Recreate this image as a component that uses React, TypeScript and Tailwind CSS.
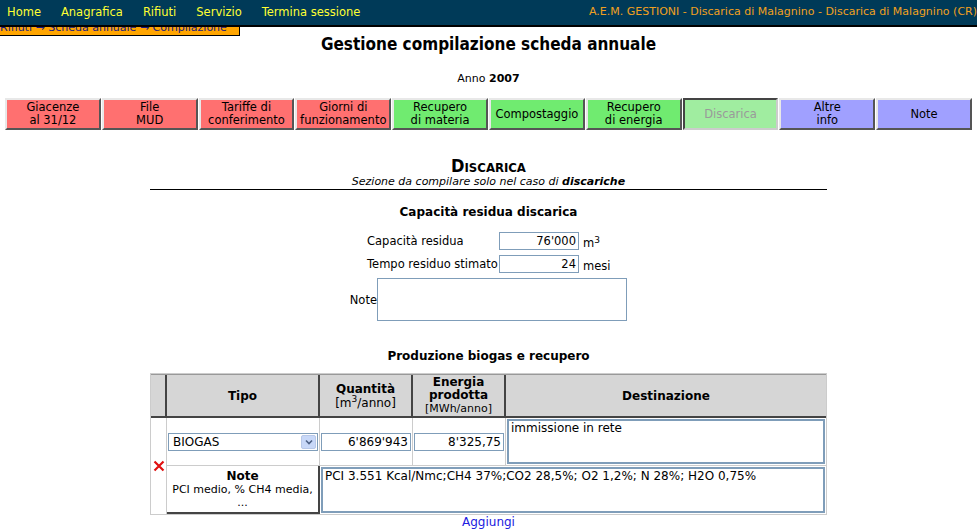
import React from "react";

const tabs = [
  { label: ["Giacenze", "al 31/12"], color: "red" },
  { label: ["File", "MUD"], color: "red" },
  { label: ["Tariffe di", "conferimento"], color: "red" },
  { label: ["Giorni di", "funzionamento"], color: "red" },
  { label: ["Recupero", "di materia"], color: "green" },
  { label: ["Compostaggio"], color: "green" },
  { label: ["Recupero", "di energia"], color: "green" },
  { label: ["Discarica"], color: "off" },
  { label: ["Altre", "info"], color: "blue" },
  { label: ["Note"], color: "blue" },
];

const tabClass: Record<string, string> = {
  red: "bg-[#ff7070] text-black border-2 border-t-[#e8e8e8] border-l-[#e8e8e8] border-r-[#555] border-b-[#555]",
  green: "bg-[#70eb70] text-black border-2 border-t-[#e8e8e8] border-l-[#e8e8e8] border-r-[#555] border-b-[#555]",
  off: "bg-[#a0eda0] text-[#9a9a9a] border-2 border-t-[#444] border-l-[#444] border-r-[#ccc] border-b-[#ccc]",
  blue: "bg-[#a0a0ff] text-black border-2 border-t-[#e8e8e8] border-l-[#e8e8e8] border-r-[#555] border-b-[#555]",
};

const menu = ["Home", "Anagrafica", "Rifiuti", "Servizio", "Termina sessione"];

export default function App() {
  return (
    <div className="relative w-[977px] h-[529px] overflow-hidden bg-white text-black font-['DejaVu_Sans',Verdana,sans-serif]">
      {/* top bar */}
      <div className="relative z-10 flex h-[27px] items-center justify-between border-b-2 border-black bg-[#003a58] pl-[7px]">
        <div className="flex gap-[20px] whitespace-nowrap text-[11.5px] text-[#ffff33]">
          {menu.map((m) => (
            <span key={m}>{m}</span>
          ))}
        </div>
        <div className="whitespace-nowrap pl-4 text-[11px] text-[#f0a020]">
          A.E.M. GESTIONI - Discarica di Malagnino - Discarica di Malagnino (CR)
        </div>
      </div>
      {/* breadcrumb, mostly hidden under the bar */}
      <div className="absolute left-0 top-[24px] h-[12px] w-[240px] overflow-hidden border-b border-r border-black bg-[#ffa500]">
        <div className="-mt-[4px] whitespace-nowrap text-[11px] text-[#1a1a80]">
          Rifiuti → Scheda annuale → Compilazione
        </div>
      </div>

      <div className="px-[5px]">
        <h1 className="mt-[6px] text-center text-[17px] font-bold leading-[22px] font-['DejaVu_Sans_Condensed',Tahoma,sans-serif]">
          Gestione compilazione scheda annuale
        </h1>
        <div className="mt-[17px] text-center text-[11px] leading-[14px]">
          Anno <b>2007</b>
        </div>

        <div className="mt-[12px] grid grid-cols-10 gap-px">
          {tabs.map((t) => (
            <div
              key={t.label.join()}
              className={`flex h-[32px] flex-col items-center justify-center text-[11.5px] leading-[13px] ${tabClass[t.color]}`}
            >
              {t.label.map((l) => (
                <span key={l}>{l}</span>
              ))}
            </div>
          ))}
        </div>

        <div className="mx-auto mt-[26px] w-[677px]">
          <div className="text-center text-[18px] font-bold leading-[20px] [font-variant:small-caps] font-['DejaVu_Sans_Condensed',Tahoma,sans-serif]">
            Discarica
          </div>
          <div className="border-b border-black pb-px text-center text-[11px] italic leading-[12px]">
            Sezione da compilare solo nel caso di <b>discariche</b>
          </div>

          <div className="mt-[15px] text-center text-[12px] font-bold leading-[14px]">
            Capacità residua discarica
          </div>

          <div className="mt-[13px] ml-[198px] flex flex-col gap-[5px] whitespace-nowrap text-[11.5px] leading-[18px]">
            <div className="flex h-[18px] items-center">
              <span className="w-[151px] pl-[19px]">Capacità residua</span>
              <div className="flex h-[18px] w-[80px] items-center justify-end border border-[#7f9db9] px-[2px]">76'000</div>
              <span className="ml-[4px] mt-[4px]">
                m<sup className="text-[9px]">3</sup>
              </span>
            </div>
            <div className="flex h-[18px] items-center">
              <span className="w-[151px] pl-[19px]">Tempo residuo stimato</span>
              <div className="flex h-[18px] w-[80px] items-center justify-end border border-[#7f9db9] px-[2px]">24</div>
              <span className="ml-[4px] mt-[4px]">mesi</span>
            </div>
            <div className="flex items-center">
              <span className="w-[29px] text-right">Note</span>
              <div className="h-[43px] w-[250px] border border-[#7f9db9]" />
            </div>
          </div>

          <div className="mt-[28px] text-center text-[12px] font-bold leading-[14px]">
            Produzione biogas e recupero
          </div>

          <div className="mt-[10px] border border-[#ccc] text-[12px]">
            <div className="grid grid-cols-[16px_153px_93px_93px_1fr] bg-[#d6d6d6] border-t border-[#999] text-center">
              <div className="h-[43px] border-r-2 border-b-2 border-[#444] bg-[#d6d6d6]" />
              <div className="flex items-center justify-center border-r-2 border-b-2 border-[#444] font-bold">Tipo</div>
              <div className="flex flex-col items-center justify-center border-r-2 border-b-2 border-[#444] leading-[14px]">
                <b>Quantità</b>
                <span>
                  [m<sup className="text-[9px]">3</sup>/anno]
                </span>
              </div>
              <div className="flex flex-col items-center justify-center border-r-2 border-b-2 border-[#444] leading-[13px]">
                <b>Energia</b>
                <b>prodotta</b>
                <span className="text-[11px]">[MWh/anno]</span>
              </div>
              <div className="flex items-center justify-center border-b-2 border-[#444] font-bold">Destinazione</div>
            </div>

            <div className="grid grid-cols-[16px_153px_93px_93px_1fr] grid-rows-[48px_48px]">
              <div className="row-span-2 flex items-center justify-center border-r border-[#ccc]">
                <svg width="12" height="12" viewBox="0 0 12 12">
                  <path d="M1.5 1.5 L10.5 10.5 M10.5 1.5 L1.5 10.5" stroke="#e01010" strokeWidth="2.2" />
                </svg>
              </div>
              <div className="flex items-center border-r border-b border-[#ccc] px-[1px]">
                <div className="flex h-[18px] w-full items-center justify-between border border-[#7f9db9] pl-[4px] pr-[1px]">
                  <span>BIOGAS</span>
                  <span className="flex h-[14px] w-[15px] items-center justify-center rounded-[2px] border border-[#b8c8e8] bg-[#c8d8f8]">
                    <svg width="8" height="6" viewBox="0 0 8 6">
                      <path d="M1 1.5 L4 4.5 L7 1.5" stroke="#4d6185" strokeWidth="1.6" fill="none" />
                    </svg>
                  </span>
                </div>
              </div>
              <div className="flex items-center border-r border-b border-[#ccc] px-[1px]">
                <div className="flex h-[18px] w-full items-center justify-end border border-[#7f9db9] px-[2px]">6'869'943</div>
              </div>
              <div className="flex items-center border-r border-b border-[#ccc] px-[1px]">
                <div className="flex h-[18px] w-full items-center justify-end border border-[#7f9db9] px-[2px]">8'325,75</div>
              </div>
              <div className="border-b border-[#ccc] p-[1px]">
                <div className="h-full border-2 border-[#7f9db9] px-[2px] leading-[15px]">immissione in rete</div>
              </div>

              <div className="flex flex-col items-center justify-center border-r-2 border-b-2 border-[#444] leading-[13px]">
                <b className="text-[12px]">Note</b>
                <span className="text-[11px]">PCI medio, % CH4 media,</span>
                <span className="text-[11px]">...</span>
              </div>
              <div className="col-span-3 p-[1px]">
                <div className="h-full border-2 border-[#7f9db9] px-[2px] leading-[15px]">
                  PCI 3.551 Kcal/Nmc;CH4 37%;CO2 28,5%; O2 1,2%; N 28%; H2O 0,75%
                </div>
              </div>
            </div>
          </div>

          <div className="text-center text-[12px] leading-[14px] text-[#2020e0]">Aggiungi</div>
        </div>
      </div>
    </div>
  );
}
